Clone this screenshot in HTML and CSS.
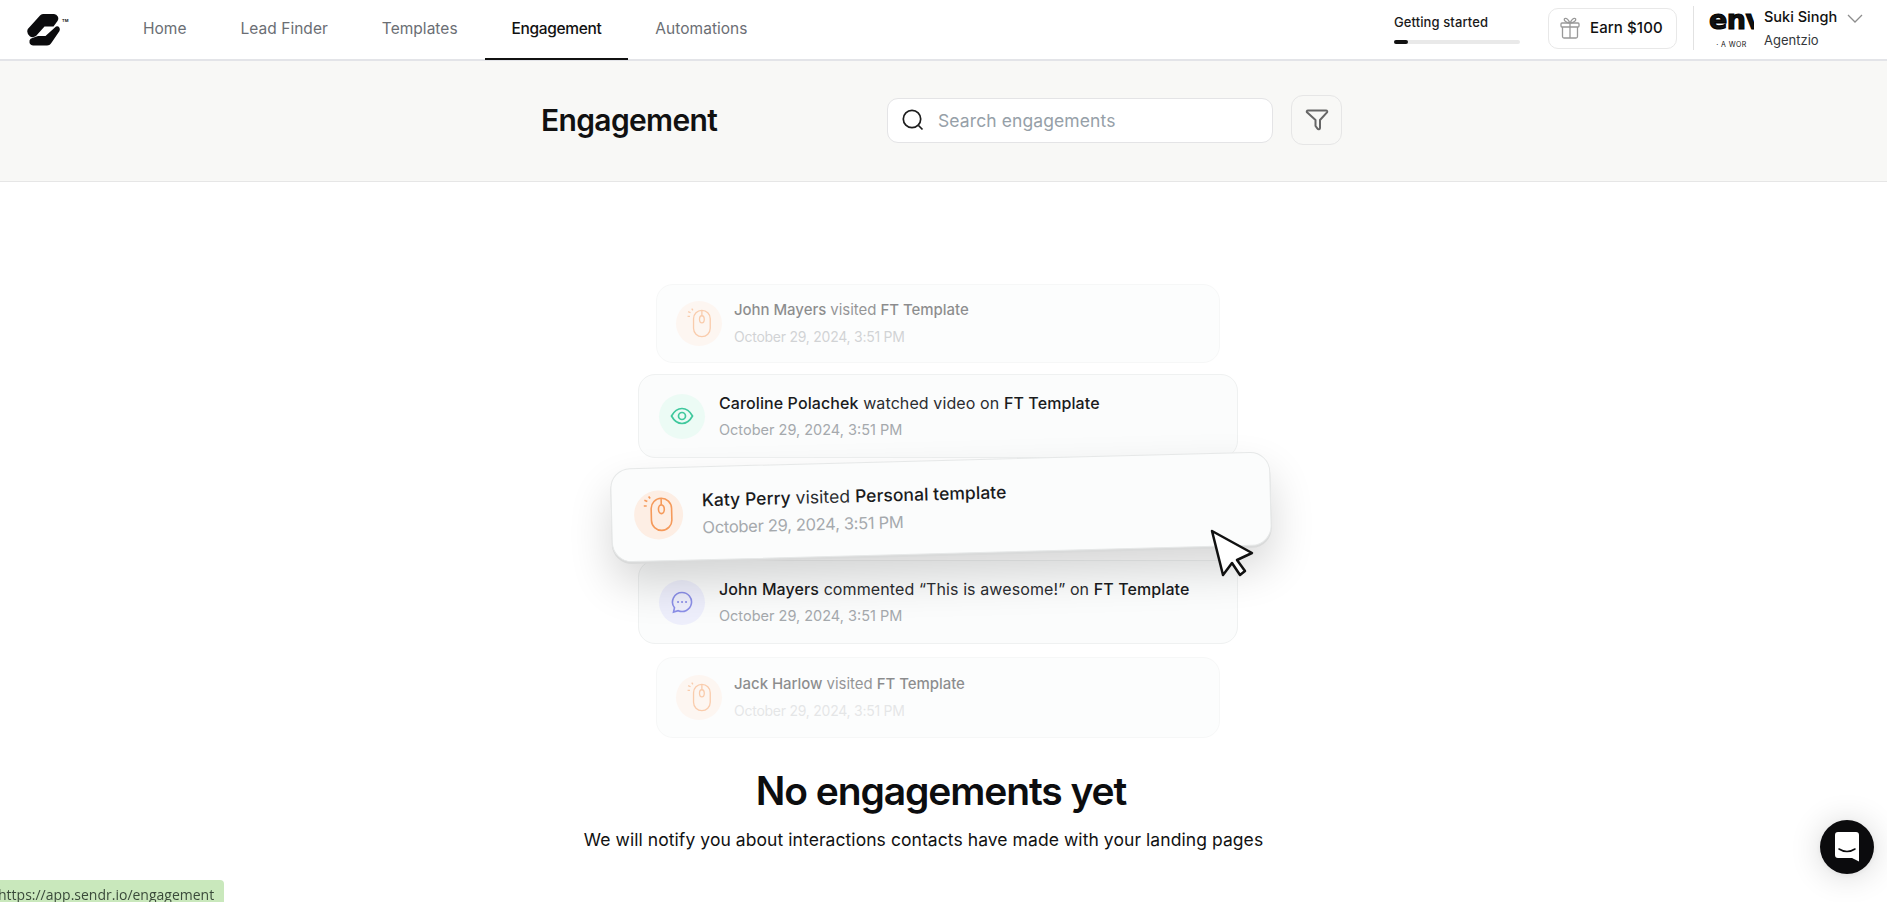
FILE: index.html
```html
<!DOCTYPE html>
<html>

<head>
    <meta charset="utf-8" />
    <title>Engagement</title>
    <link rel="stylesheet" href="styles.css">
</head>

<body>

    <header class="topbar">
        <div class="logo">
            <svg width="34" height="32" viewBox="0 0 34 32">
                <path d="M13 1.500Q14 0 16 0H27a4.500 4.500 0 0 1 3.500 7L26.500 12.500H17.500L9 22Q6 24 3 22.500Q-1 19 .8 15z" fill="#0b0b0d" />
                <path d="M32 13Q33.500 15 32.500 17L25 28Q23 31.500 20 31.500H6Q2 31 2.500 26.500Q3 24.500 6 23.800L11 22H18.500L29 12.500Q31 12 32 13z" fill="#0b0b0d" />
            </svg>
            <span class="tm">TM</span>
        </div>
        <nav class="tabs">
            <a class="tab">Home</a>
            <a class="tab">Lead Finder</a>
            <a class="tab">Templates</a>
            <a class="tab active">Engagement</a>
            <a class="tab">Automations</a>
        </nav>
        <div class="progress">
            <span class="progressLabel">Getting started</span>
            <div class="progressTrack"><div class="progressFill"></div></div>
        </div>
        <button class="earn">
            <svg width="20" height="22" viewBox="0 0 20 22" fill="none" stroke="#999" stroke-width="1.300">
                <rect x="1" y="6" width="18" height="4" rx="1" />
                <path d="M2.500 10v9.500a1.500 1.500 0 0 0 1.500 1.500h12a1.500 1.500 0 0 0 1.500-1.500V10M10 6v15M10 6C8 2 6 1 4.800 1.500 3.500 2.200 4.500 5.500 10 6zM10 6c2-4 4-5 5.200-4.500 1.300.7.300 4-5.200 4.500z" />
            </svg>
            Earn $100
        </button>
        <div class="account">
            <div class="avatar">
                <span class="avatarMark">env</span>
                <span class="avatarSub">· A WOR</span>
            </div>
            <div class="who">
                <span class="whoName">Suki Singh</span>
                <span class="whoOrg">Agentzio</span>
            </div>
            <svg class="chevron" width="16" height="9" viewBox="0 0 16 9" fill="none" stroke="#8d8d8d" stroke-width="1.300">
                <path d="M1 1l7 7 7-7" />
            </svg>
        </div>
    </header>

    <section class="subheader">
        <div class="subInner">
            <h1 class="pageTitle">Engagement</h1>
            <div class="tools">
                <div class="search">
                    <svg width="22" height="22" viewBox="0 0 22 22" fill="none" stroke="#1c1c1c" stroke-width="1.700">
                        <circle cx="10" cy="10" r="8.700" />
                        <path d="M16.500 16.500l4 4" />
                    </svg>
                    <span class="searchHint">Search engagements</span>
                </div>
                <button class="filter">
                    <svg width="24" height="24" viewBox="0 0 24 24" fill="none" stroke="#666" stroke-width="2" stroke-linejoin="round">
                        <path d="M3 2.500h18c1.200 0 1.600 1 1 1.800L15 12v8c0 1.300-1.700 1.800-2.500.7L10.500 18V12L2 4.300c-.6-.8-.2-1.800 1-1.800z" />
                    </svg>
                </button>
            </div>
        </div>
    </section>

    <main class="empty">
        <div class="stack">
            <div class="card small fadeTop">
                <span class="bubble orange">
                    <svg width="29" height="31" viewBox="0 0 24 26" fill="none" stroke="#f59a5b" stroke-width="1.100">
                        <rect x="7" y="2" width="14" height="22" rx="7" />
                        <ellipse cx="14" cy="9.500" rx="2" ry="3" />
                        <path d="M14 2v4.500M4.500 4L2.500 3M6.500 2L5.500 .5M4 7H2" />
                    </svg>
                </span>
                <div class="lines">
                    <span class="line"><b>John Mayers</b> visited <b>FT Template</b></span>
                    <span class="date">October 29, 2024, 3:51 PM</span>
                </div>
            </div>

            <div class="card medium">
                <span class="bubble green">
                    <svg width="24" height="24" viewBox="0 0 24 24" fill="none" stroke="#3fc89d" stroke-width="1.700">
                        <path d="M1.500 12C4.500 6.500 8 4.500 12 4.500s7.500 2 10.500 7.500c-3 5.500-6.500 7.500-10.500 7.500S4.500 17.500 1.500 12z" />
                        <circle cx="12" cy="12" r="3.500" />
                    </svg>
                </span>
                <div class="lines">
                    <span class="line"><b>Caroline Polachek</b> watched video on <b>FT Template</b></span>
                    <span class="date">October 29, 2024, 3:51 PM</span>
                </div>
            </div>

            <div class="card hero">
                <span class="bubble orange">
                    <svg width="35" height="38" viewBox="0 0 24 26" fill="none" stroke="#f59a5b" stroke-width="1.100">
                        <rect x="7" y="2" width="14" height="22" rx="7" />
                        <ellipse cx="14" cy="9.500" rx="2" ry="3" />
                        <path d="M14 2v4.500M4.500 4L2.500 3M6.500 2L5.500 .5M4 7H2" />
                    </svg>
                </span>
                <div class="lines">
                    <span class="line"><b>Katy Perry</b> visited <b>Personal template</b></span>
                    <span class="date">October 29, 2024, 3:51 PM</span>
                </div>
            </div>

            <div class="card medium under">
                <span class="bubble purple">
                    <svg width="24" height="24" viewBox="0 0 24 24" fill="none" stroke="#8b8fe8" stroke-width="1.600">
                        <path d="M12 2.500a9.500 9.500 0 1 1-3.800 18.200L3.500 22l1-4.200A9.500 9.500 0 0 1 12 2.500z" />
                        <path d="M8 12h.1M12 12h.1M16 12h.1" stroke-width="2" stroke-linecap="round" />
                    </svg>
                </span>
                <div class="lines">
                    <span class="line"><b>John Mayers</b> commented “This is awesome!” on <b>FT Template</b></span>
                    <span class="date">October 29, 2024, 3:51 PM</span>
                </div>
            </div>

            <div class="card small fadeBottom">
                <span class="bubble orange">
                    <svg width="29" height="31" viewBox="0 0 24 26" fill="none" stroke="#f59a5b" stroke-width="1.100">
                        <rect x="7" y="2" width="14" height="22" rx="7" />
                        <ellipse cx="14" cy="9.500" rx="2" ry="3" />
                        <path d="M14 2v4.500M4.500 4L2.500 3M6.500 2L5.500 .5M4 7H2" />
                    </svg>
                </span>
                <div class="lines">
                    <span class="line"><b>Jack Harlow</b> visited <b>FT Template</b></span>
                    <span class="date">October 29, 2024, 3:51 PM</span>
                </div>
            </div>

            <svg class="pointer" width="45" height="48" viewBox="0 0 45 48">
                <path d="M2 2L42 24 27 31 35 42 30 46 22 34 13 46z" fill="#fff" stroke="#111" stroke-width="2.500" stroke-linejoin="round" />
            </svg>
        </div>

        <h2 class="emptyTitle">No engagements yet</h2>
        <p class="emptyText">We will notify you about interactions contacts have made with your landing pages</p>
    </main>

    <div class="statusLink"><span>https://app.sendr.io/engagement</span></div>

    <button class="chatBtn">
        <svg width="24" height="30" viewBox="0 0 24 30">
            <path d="M3 0h18a3 3 0 0 1 3 3v26.500L17 26H3a3 3 0 0 1-3-3V3a3 3 0 0 1 3-3z" fill="#fff" />
            <path d="M4 17c5 3.200 11 3.200 16 0" fill="none" stroke="#0b0b0d" stroke-width="1.500" stroke-linecap="round" />
        </svg>
    </button>

</body>

</html>
```

FILE: styles.css
```css
html,
body {
    margin: 0;
    height: 100%;
    overflow: hidden;
    background: white;
    font-family: Inter, "Liberation Sans", sans-serif;
    color: #111;
}

/* top bar */
.topbar {
    display: flex;
    align-items: center;
    height: 59px;
    padding-left: 27px;
    padding-right: 24px;
    background: white;
    border-bottom: 2px solid #e3e4e8;
}

.logo {
    display: flex;
    align-items: flex-start;
    width: 89px;
    height: 48px;
    margin-bottom: 3px;
    padding-top: 10px;
    box-sizing: border-box;
}

.tm {
    font-size: 4px;
    font-weight: 700;
    margin-left: 1px;
    margin-top: 4px;
}

.tabs {
    display: flex;
    height: 100%;
}

.tab {
    display: flex;
    align-items: center;
    padding: 0 27px 2px 27px;
    font-size: 15.500px;
    letter-spacing: 0.03px;
    color: #6b6e74;
    border-bottom: 2px solid transparent;
    margin-bottom: -1px;
}

.tab.active {
    color: #111;
    font-weight: 500;
    letter-spacing: -0.35px;
    border-bottom-color: #111;
}

.progress {
    display: flex;
    flex-direction: column;
    width: 126px;
    margin-left: auto;
    margin-right: 28px;
    margin-bottom: 2px;
}

.progressLabel {
    font-size: 13px;
    font-weight: 500;
    letter-spacing: 0.1px;
    color: #1a1a1a;
    margin-bottom: 10px;
}

.progressTrack {
    height: 4px;
    border-radius: 2px;
    background: #e9e9e9;
}

.progressFill {
    width: 14px;
    height: 4px;
    border-radius: 2px;
    background: #111;
}

.earn {
    display: flex;
    align-items: center;
    gap: 10px;
    width: 129px;
    height: 41px;
    margin-bottom: 2px;
    padding: 0 0 2px 11px;
    box-sizing: border-box;
    background: white;
    border: 1px solid #e8e8e8;
    border-radius: 10px;
    font-family: inherit;
    font-size: 15px;
    font-weight: 500;
    letter-spacing: 0.1px;
    color: #111;
}

.account {
    display: flex;
    align-items: flex-start;
    height: 44px;
    margin-left: 16px;
    margin-bottom: 3px;
    padding-left: 15px;
    border-left: 1px solid #e2e2e2;
}

.avatar {
    display: flex;
    flex-direction: column;
    align-items: center;
    width: 45px;
    height: 44px;
    overflow: hidden;
}

.avatarMark {
    font-family: "DejaVu Sans", sans-serif;
    font-size: 27px;
    font-weight: 700;
    line-height: 26px;
    letter-spacing: -0.5px;
    white-space: nowrap;
    align-self: flex-start;
    margin-top: 1px;
    -webkit-text-stroke: 1.100px #000;
}

.avatarSub {
    font-size: 7px;
    line-height: 8px;
    margin-top: 8px;
    letter-spacing: 0.4px;
    white-space: nowrap;
}

.who {
    display: flex;
    flex-direction: column;
    margin-left: 10px;
    width: 83px;
}

.whoName {
    font-size: 14.500px;
    font-weight: 500;
    letter-spacing: 0;
    line-height: 22px;
}

.whoOrg {
    font-size: 13px;
    line-height: 18px;
    margin-top: 3px;
    color: #33363a;
}

.chevron {
    margin-top: 8px;
}

/* page head */
.subheader {
    height: 120px;
    background: #f8f8f6;
    border-bottom: 1px solid #e6e6e6;
}

.subInner {
    display: flex;
    justify-content: space-between;
    align-items: center;
    width: 801px;
    height: 100%;
    margin: 0 auto;
    padding-bottom: 2px;
    box-sizing: border-box;
    transform: translateX(-2px);
}

.pageTitle {
    margin: 0;
    font-size: 30px;
    font-weight: 600;
    letter-spacing: -0.65px;
}

.tools {
    display: flex;
    align-items: center;
    gap: 18px;
}

.search {
    display: flex;
    align-items: center;
    gap: 14px;
    width: 386px;
    height: 45px;
    padding-left: 14px;
    box-sizing: border-box;
    background: white;
    border: 1px solid #e4e4e6;
    border-radius: 11px;
}

.searchHint {
    font-size: 17.500px;
    letter-spacing: 0.1px;
    color: #96a0a8;
}

.filter {
    display: flex;
    align-items: center;
    justify-content: center;
    width: 51px;
    height: 50px;
    padding: 0;
    background: #f8f8f6;
    border: 1px solid #e6e6e6;
    border-radius: 12px;
}

/* empty state */
.empty {
    display: flex;
    flex-direction: column;
    align-items: center;
    padding-top: 102px;
}

.stack {
    position: relative;
    display: flex;
    flex-direction: column;
    align-items: center;
    width: 660px;
    margin-right: 11px;
}

.card {
    display: flex;
    align-items: center;
    box-sizing: border-box;
    background: #fbfcfc;
    border: 1px solid #eff1f1;
    border-radius: 17px;
}

.small {
    width: 564px;
    height: 79px;
    padding-left: 19px;
    gap: 12px;
}

.small .line {
    font-size: 15px;
    letter-spacing: -0.05px;
}

.small .date {
    font-size: 14px;
    letter-spacing: -0.25px;
}

.medium {
    width: 600px;
    height: 84px;
    padding-left: 20px;
    gap: 14px;
}

.fadeTop {
    opacity: 0.5;
    margin-bottom: 11px;
}

.fadeBottom {
    height: 81px;
    opacity: 0.5;
    margin-top: 13px;
}

.fadeBottom .date {
    opacity: 0.55;
}

.hero {
    position: relative;
    z-index: 2;
    width: 660px;
    height: 94px;
    margin-top: 2px;
    margin-bottom: 6px;
    margin-left: 5px;
    padding-left: 22px;
    gap: 19px;
    border-color: #e6e8e8;
    border-radius: 20px;
    transform: rotate(-1.500deg);
    box-shadow: 0 2px 0 #d9dada, 0 22px 44px rgba(0, 0, 0, 0.16);
}

.hero .line {
    font-size: 17.500px;
    letter-spacing: 0.05px;
}

.hero .date {
    font-size: 16.500px;
    letter-spacing: -0.3px;
}

.hero .bubble {
    width: 49px;
    height: 49px;
}

.under {
    margin-top: 0;
}

.bubble {
    display: flex;
    align-items: center;
    justify-content: center;
    flex-shrink: 0;
    width: 46px;
    height: 45px;
    border-radius: 50%;
}

.orange {
    background: #fdeee4;
}

.green {
    background: #ecfbf5;
}

.purple {
    background: #eeeffc;
}

.lines {
    display: flex;
    flex-direction: column;
    gap: 7px;
}

.line {
    font-size: 16px;
    line-height: 20px;
    letter-spacing: 0.1px;
    color: #2b2d30;
    white-space: nowrap;
}

.line b {
    font-weight: 500;
    color: #1a1b1d;
}

.date {
    font-size: 14.500px;
    line-height: 20px;
    letter-spacing: 0;
    color: #a5a9ad;
}

.pointer {
    position: absolute;
    z-index: 3;
    left: 602px;
    top: 245px;
}

.emptyTitle {
    margin: 29px 5px 12px 0;
    font-size: 39px;
    font-weight: 600;
    line-height: 48px;
    letter-spacing: -1.100px;
    color: #0c0d0f;
}

.emptyText {
    margin: 0 40px 0 0;
    font-size: 17.500px;
    line-height: 26px;
    letter-spacing: 0.07px;
    color: #111;
}

/* overlays */
.statusLink {
    position: fixed;
    left: 0;
    bottom: 0;
    width: 224px;
    height: 22px;
    overflow: hidden;
    background: #c9e8bc;
    border-top-right-radius: 4px;
}

.statusLink span {
    display: block;
    margin-left: -2px;
    margin-top: 5px;
    font-family: "Open Sans", sans-serif;
    font-size: 14px;
    line-height: 19px;
    color: #3a4a3a;
    white-space: nowrap;
}

.chatBtn {
    position: fixed;
    right: 13px;
    bottom: 28px;
    display: flex;
    align-items: center;
    justify-content: center;
    width: 54px;
    height: 54px;
    padding: 0;
    border: none;
    border-radius: 50%;
    background: #0b0b0d;
    box-shadow: 0 1px 6px rgba(0, 0, 0, 0.06), 0 2px 32px rgba(0, 0, 0, 0.16);
}
```
